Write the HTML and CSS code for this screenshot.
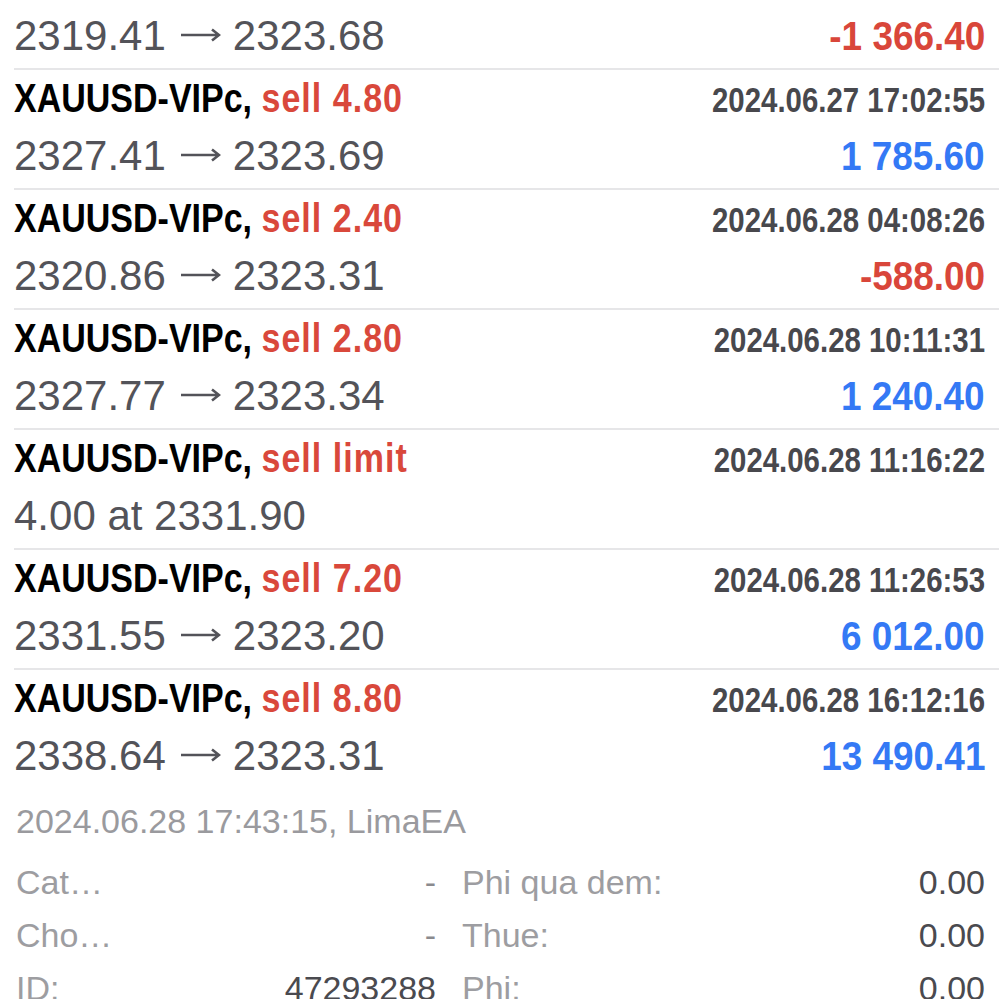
FILE: index.html
```html
<html>
<head>
  <title>History</title>
  <link rel="stylesheet" href="styles.css">
</head>
<body>
  <div class="deals">
    <div class="deal">
      <div class="head"><span class="sym">XAUUSD-VIPc, <span class="sell">sell 5.60</span></span><span class="time">2024.06.27 16:31:08</span></div>
      <div class="body"><span class="price">2319.41<svg class="arrow" width="41" height="14" viewBox="0 0 41 14"><path d="M1 7H39M32 1.5L39 7L32 12.5"/></svg>2323.68</span><span class="profit loss">-1 366.40</span></div>
    </div>
    <div class="deal">
      <div class="head"><span class="sym">XAUUSD-VIPc, <span class="sell">sell 4.80</span></span><span class="time">2024.06.27 17:02:55</span></div>
      <div class="body"><span class="price">2327.41<svg class="arrow" width="41" height="14" viewBox="0 0 41 14"><path d="M1 7H39M32 1.5L39 7L32 12.5"/></svg>2323.69</span><span class="profit gain">1 785.60</span></div>
    </div>
    <div class="deal">
      <div class="head"><span class="sym">XAUUSD-VIPc, <span class="sell">sell 2.40</span></span><span class="time">2024.06.28 04:08:26</span></div>
      <div class="body"><span class="price">2320.86<svg class="arrow" width="41" height="14" viewBox="0 0 41 14"><path d="M1 7H39M32 1.5L39 7L32 12.5"/></svg>2323.31</span><span class="profit loss">-588.00</span></div>
    </div>
    <div class="deal">
      <div class="head"><span class="sym">XAUUSD-VIPc, <span class="sell">sell 2.80</span></span><span class="time">2024.06.28 10:11:31</span></div>
      <div class="body"><span class="price">2327.77<svg class="arrow" width="41" height="14" viewBox="0 0 41 14"><path d="M1 7H39M32 1.5L39 7L32 12.5"/></svg>2323.34</span><span class="profit gain">1 240.40</span></div>
    </div>
    <div class="deal">
      <div class="head"><span class="sym">XAUUSD-VIPc, <span class="sell">sell limit</span></span><span class="time">2024.06.28 11:16:22</span></div>
      <div class="body"><span class="price">4.00 at 2331.90</span></div>
    </div>
    <div class="deal">
      <div class="head"><span class="sym">XAUUSD-VIPc, <span class="sell">sell 7.20</span></span><span class="time">2024.06.28 11:26:53</span></div>
      <div class="body"><span class="price">2331.55<svg class="arrow" width="41" height="14" viewBox="0 0 41 14"><path d="M1 7H39M32 1.5L39 7L32 12.5"/></svg>2323.20</span><span class="profit gain">6 012.00</span></div>
    </div>
    <div class="deal">
      <div class="head"><span class="sym">XAUUSD-VIPc, <span class="sell">sell 8.80</span></span><span class="time">2024.06.28 16:12:16</span></div>
      <div class="body"><span class="price">2338.64<svg class="arrow" width="41" height="14" viewBox="0 0 41 14"><path d="M1 7H39M32 1.5L39 7L32 12.5"/></svg>2323.31</span><span class="profit gain">13 490.41</span></div>
    </div>
  </div>

  <div class="summary">
    <div class="stamp">2024.06.28 17:43:15, LimaEA</div>
    <div class="grid">
      <div class="cell"><span class="label">Cat…</span><span class="dash">-</span></div>
      <div class="cell"><span class="label">Phi qua dem:</span><span class="value">0.00</span></div>
      <div class="cell"><span class="label">Cho…</span><span class="dash">-</span></div>
      <div class="cell"><span class="label">Thue:</span><span class="value">0.00</span></div>
      <div class="cell"><span class="label">ID:</span><span class="value">47293288</span></div>
      <div class="cell"><span class="label">Phi:</span><span class="value">0.00</span></div>
    </div>
  </div>
</body>
</html>
```

FILE: styles.css
```css
body {
  margin: 0;
  background: #ffffff;
  font-family: "Liberation Sans", Arial, sans-serif;
  overflow: hidden;
}
.deals {
  margin-top: -52px;
}
.deal {
  margin-left: 14px;
  padding-right: 14px;
  padding-bottom: 3px;
  border-top: 2px solid #e6e6e8;
}
.head, .body {
  display: flex;
  justify-content: space-between;
  align-items: baseline;
}
.head {
  height: 56px;
  line-height: 56px;
}
.body {
  height: 59px;
  line-height: 59px;
}
/* condensed bold look: no narrow face installed, so squeeze it */
.sym {
  display: inline-block;
  transform: scaleX(0.85);
  transform-origin: left center;
  white-space: nowrap;
  font-weight: bold;
  font-size: 40px;
  color: #000000;
}
.sell {
  color: #d9483b;
  letter-spacing: 1.2px;
}
.time {
  display: inline-block;
  transform: scaleX(0.84);
  transform-origin: right center;
  white-space: nowrap;
  font-weight: bold;
  font-size: 35px;
  color: #48484d;
}
.price {
  font-size: 42px;
  color: #535359;
  white-space: nowrap;
}
.arrow {
  margin: 0 12px 0 14px;
  vertical-align: 8px;
}
.arrow path {
  fill: none;
  stroke: #535359;
  stroke-width: 2.6;
}
.profit {
  display: inline-block;
  transform: scaleX(0.9);
  transform-origin: right center;
  white-space: nowrap;
  font-weight: bold;
  font-size: 41px;
}
.loss {
  color: #d9463a;
}
.gain {
  color: #3479f5;
}
.summary {
  padding: 6px 14px 0 16px;
}
.stamp {
  font-size: 34px;
  line-height: 54px;
  color: #9a9a9e;
}
.grid {
  display: grid;
  grid-template-columns: 420px 1fr;
  column-gap: 26px;
  margin-top: 8px;
}
.cell {
  display: flex;
  justify-content: space-between;
  font-size: 34px;
  line-height: 53px;
}
.label {
  color: #9d9da1;
}
.dash {
  color: #8a8a8e;
}
.value {
  color: #4a4a4f;
}
```
